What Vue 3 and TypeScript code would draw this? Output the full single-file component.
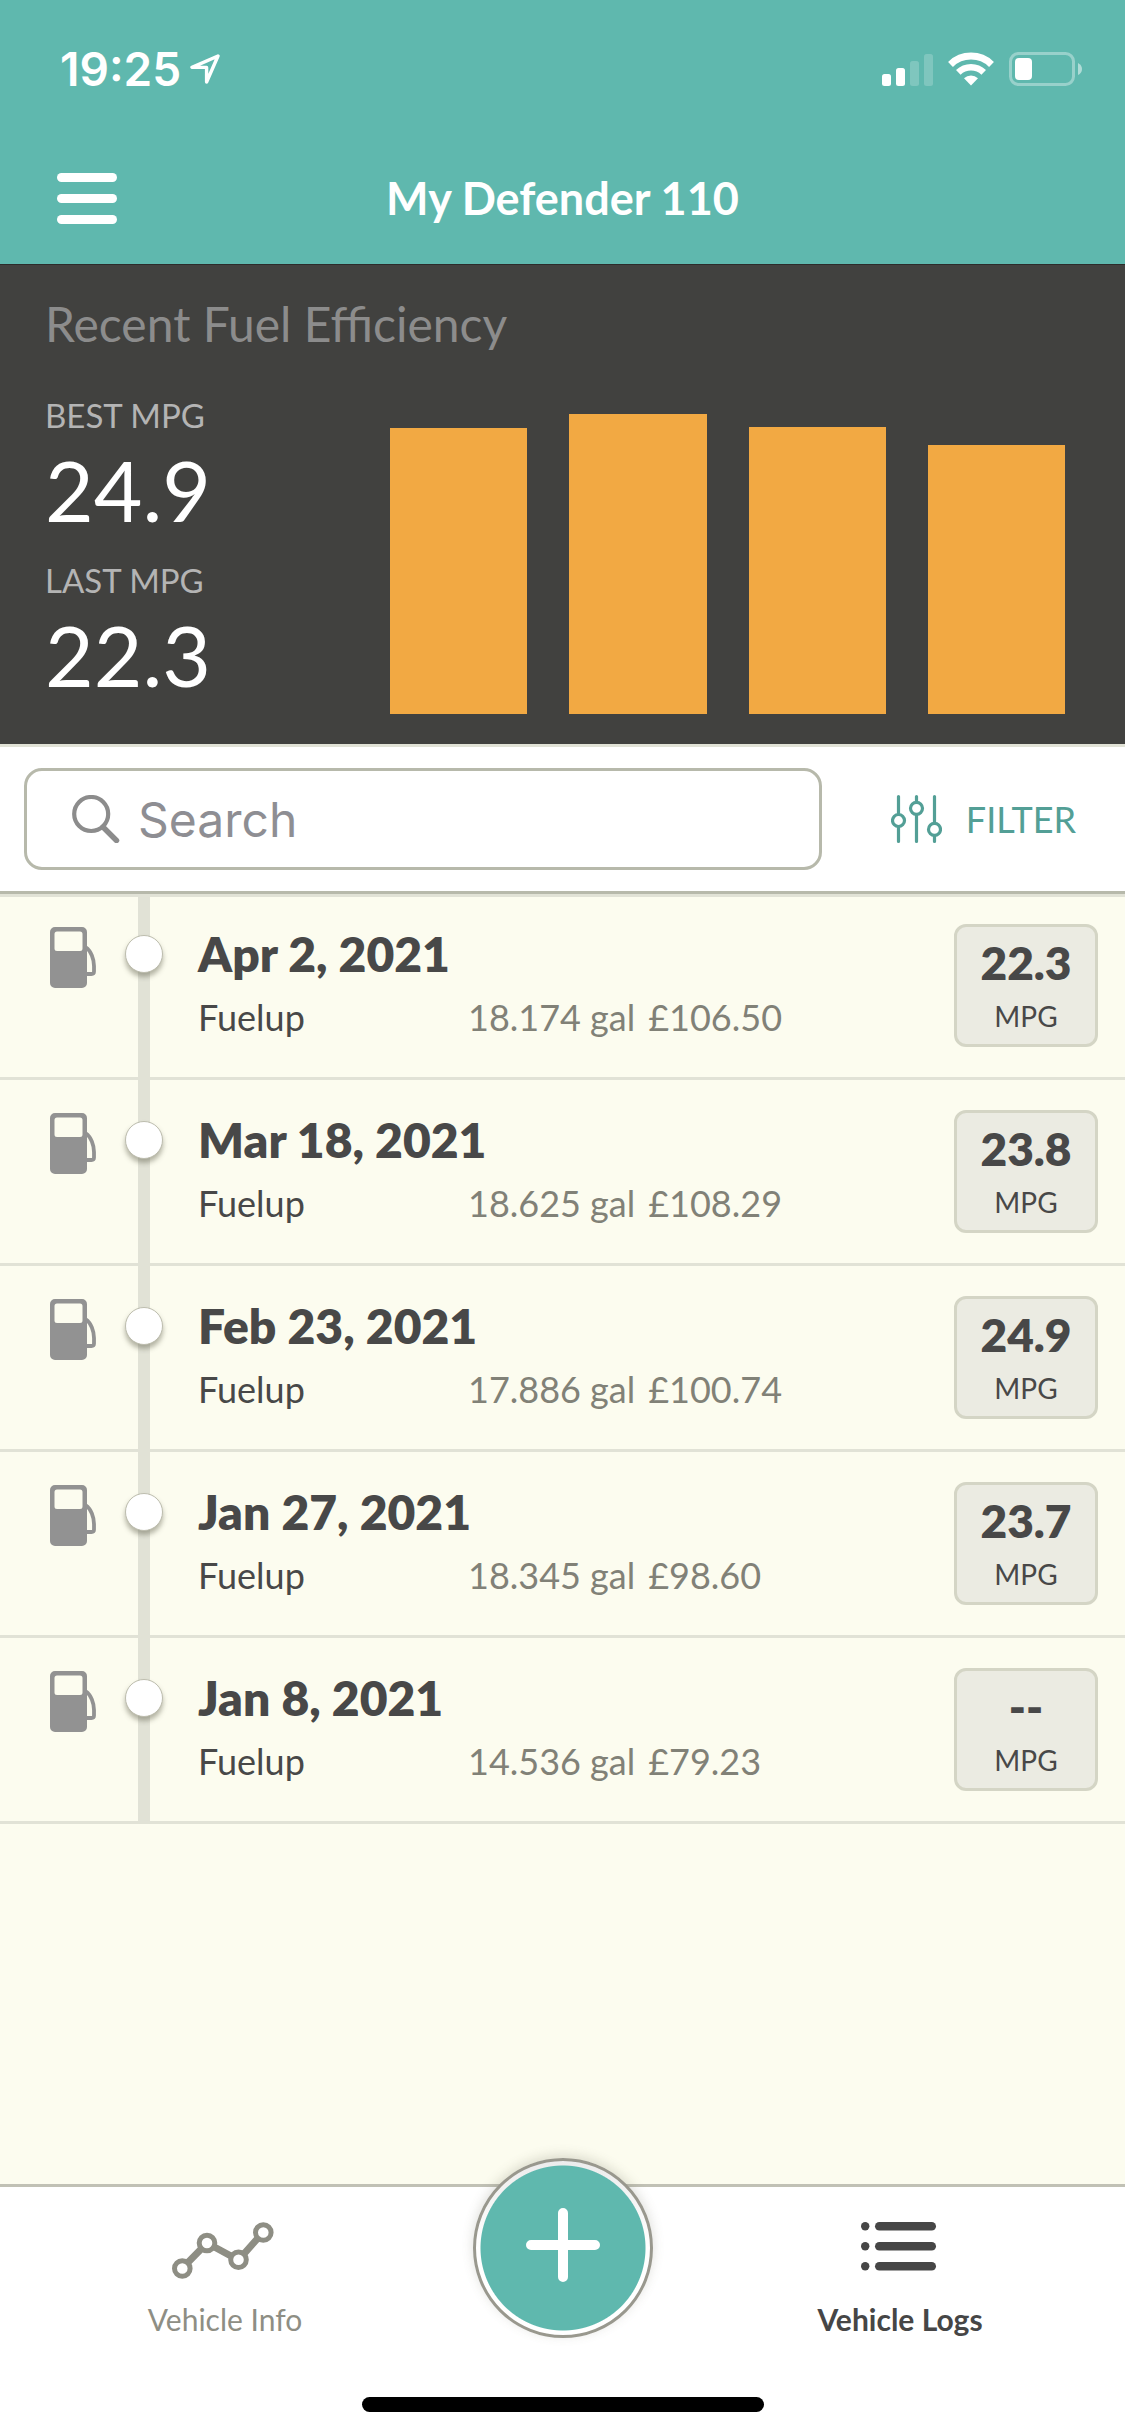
<script setup lang="ts">
import { computed, ref } from 'vue'

interface LogEntry {
  date: string
  kind: string
  volume: string
  cost: string
  mpg: number | null
}

const logs: LogEntry[] = [
  { date: 'Apr 2, 2021', kind: 'Fuelup', volume: '18.174 gal', cost: '£106.50', mpg: 22.3 },
  { date: 'Mar 18, 2021', kind: 'Fuelup', volume: '18.625 gal', cost: '£108.29', mpg: 23.8 },
  { date: 'Feb 23, 2021', kind: 'Fuelup', volume: '17.886 gal', cost: '£100.74', mpg: 24.9 },
  { date: 'Jan 27, 2021', kind: 'Fuelup', volume: '18.345 gal', cost: '£98.60', mpg: 23.7 },
  { date: 'Jan 8, 2021', kind: 'Fuelup', volume: '14.536 gal', cost: '£79.23', mpg: null },
]

const query = ref('')

const readings = computed(() =>
  logs.map((l) => l.mpg).filter((m): m is number => m !== null),
)
const best = computed(() => Math.max(...readings.value))
const last = computed(() => readings.value[0])
const bars = computed(() =>
  [...readings.value].reverse().map((m) => (m / best.value) * 100),
)
const shown = computed(() => {
  const q = query.value.trim().toLowerCase()
  return logs.filter((l) => `${l.date} ${l.kind}`.toLowerCase().includes(q))
})
</script>

<template>
  <div class="app">
    <header class="header">
      <div class="status">
        <div class="clock">
          <span>19:25</span>
          <svg width="30" height="30" viewBox="0 0 30 30" fill="none" stroke="#fff" stroke-width="3.4" stroke-linejoin="round">
            <path d="M28 2 L2 13.4 H16.6 V28 Z" />
          </svg>
        </div>
        <div class="signals">
          <svg width="51" height="33" viewBox="0 0 51 33" fill="#fff">
            <rect x="0" y="21" width="9" height="12" rx="2.5" />
            <rect x="14" y="15" width="9" height="18" rx="2.5" />
            <rect x="28" y="8" width="9" height="25" rx="2.5" opacity=".2" />
            <rect x="42" y="1" width="9" height="32" rx="2.5" opacity=".2" />
          </svg>
          <svg width="46" height="34" viewBox="0 0 46 34">
            <path d="M2.5 12.4 A29.5 29.5 0 0 1 43.5 12.4" fill="none" stroke="#fff" stroke-width="7" />
            <path d="M10.3 20.3 A18.3 18.3 0 0 1 35.7 20.3" fill="none" stroke="#fff" stroke-width="6.6" />
            <path d="M23 33.5 L16 26.2 A10.5 10.5 0 0 1 30 26.2 Z" fill="#fff" />
          </svg>
          <svg width="74" height="34" viewBox="0 0 74 34">
            <rect x="1.5" y="1.5" width="63" height="31" rx="8" fill="none" stroke="#fff" stroke-opacity=".36" stroke-width="3" />
            <rect x="6" y="6" width="17" height="22" rx="4" fill="#fff" />
            <path d="M69 11 Q73 13 73 17 Q73 21 69 23 Z" fill="#fff" opacity=".5" />
          </svg>
        </div>
      </div>
      <nav class="nav">
        <button class="menu" type="button" aria-label="Menu">
          <svg width="60" height="54" viewBox="0 0 60 54" fill="#fff">
            <rect y="2" width="60" height="9" rx="4.5" />
            <rect y="23" width="60" height="9" rx="4.5" />
            <rect y="44" width="60" height="9" rx="4.5" />
          </svg>
        </button>
        <h1>My Defender 110</h1>
      </nav>
    </header>

    <section class="summary">
      <h2>Recent Fuel Efficiency</h2>
      <div class="summary-body">
        <dl class="stats">
          <div>
            <dt>BEST MPG</dt>
            <dd>{{ best.toFixed(1) }}</dd>
          </div>
          <div>
            <dt>LAST MPG</dt>
            <dd>{{ last.toFixed(1) }}</dd>
          </div>
        </dl>
        <div class="chart">
          <div v-for="(h, i) in bars" :key="i" class="bar" :style="{ height: h + '%' }"></div>
        </div>
      </div>
    </section>

    <div class="toolbar">
      <label class="search">
        <svg width="48" height="48" viewBox="0 0 48 48" fill="none" stroke="#8c8c8c" stroke-linecap="round">
          <circle cx="19.2" cy="19" r="17" stroke-width="4.2" />
          <path d="M31 32 L44.5 45.5" stroke-width="5.4" />
        </svg>
        <input v-model="query" type="text" placeholder="Search" aria-label="Search" />
      </label>
      <button class="filter" type="button">
        <svg width="51" height="48" viewBox="0 0 51 48" fill="none" stroke="#539f96" stroke-width="3.2" stroke-linecap="round">
          <path d="M7.5 1.6 V18 M7.5 32 V46.4 M25.5 1.6 V6 M25.5 20 V46.4 M43.5 1.6 V27 M43.5 41 V46.4" />
          <circle cx="7.5" cy="25.5" r="6" />
          <circle cx="25.5" cy="13.3" r="6" />
          <circle cx="43.5" cy="34.4" r="6" />
        </svg>
        <span>FILTER</span>
      </button>
    </div>

    <main class="content">
      <ul class="logs">
        <li v-for="log in shown" :key="log.date" class="log">
          <svg class="pump" width="46" height="61" viewBox="0 0 46 61">
            <path fill="#929292" fill-rule="evenodd" d="M5 0 H32 A5 5 0 0 1 37 5 V56 A5 5 0 0 1 32 61 H5 A5 5 0 0 1 0 56 V5 A5 5 0 0 1 5 0 Z M7 4.5 A2.5 2.5 0 0 0 4.5 7 V21.5 A2.5 2.5 0 0 0 7 24 H30 A2.5 2.5 0 0 0 32.5 21.5 V7 A2.5 2.5 0 0 0 30 4.5 Z" />
            <path fill="none" stroke="#929292" stroke-width="3.8" d="M36 20.5 C41 24 44 32 44 39 V44.5 Q44 47 41.5 47 H36" />
          </svg>
          <div class="track"><span class="dot"></span></div>
          <div class="details">
            <h3>{{ log.date }}</h3>
            <p>
              <span class="kind">{{ log.kind }}</span>
              <span class="figures"><span>{{ log.volume }}</span><span>{{ log.cost }}</span></span>
            </p>
          </div>
          <div class="badge">
            <strong>{{ log.mpg === null ? '--' : log.mpg.toFixed(1) }}</strong>
            <span>MPG</span>
          </div>
        </li>
      </ul>
    </main>

    <footer class="tabbar">
      <div class="tabs">
        <a class="tab" href="#info">
          <svg width="106" height="57" viewBox="0 0 106 57" stroke="#8e8e84">
            <path d="M10 46.5 L35 21 L66.5 38 L91 10.5" fill="none" stroke-width="7" />
            <g fill="#fff" stroke-width="5">
              <circle cx="10.3" cy="46.5" r="7.8" />
              <circle cx="35" cy="21" r="7.8" />
              <circle cx="66.5" cy="37.8" r="7.8" />
              <circle cx="91.3" cy="10.5" r="7.8" />
            </g>
          </svg>
          <span>Vehicle Info</span>
        </a>
        <button class="add" type="button" aria-label="Add entry">
          <svg width="74" height="74" viewBox="0 0 74 74" fill="none" stroke="#fff" stroke-width="10" stroke-linecap="round">
            <path d="M37 5 V69 M5 37 H69" />
          </svg>
        </button>
        <a class="tab active" href="#logs" aria-current="page">
          <svg width="79" height="57" viewBox="0 0 79 57" fill="#464646">
            <circle cx="4.2" cy="4.3" r="4.2" />
            <circle cx="4.2" cy="24.3" r="4.2" />
            <circle cx="4.2" cy="44.3" r="4.2" />
            <rect x="14" y="0" width="61" height="8.6" rx="4.3" />
            <rect x="14" y="20" width="61" height="8.6" rx="4.3" />
            <rect x="14" y="40" width="61" height="8.6" rx="4.3" />
          </svg>
          <span>Vehicle Logs</span>
        </a>
      </div>
      <div class="home"></div>
    </footer>
  </div>
</template>

<style>
body {
  margin: 0;
}
</style>

<style scoped>
* {
  box-sizing: border-box;
}

.app {
  display: flex;
  flex-direction: column;
  min-height: 100vh;
  background: #fcfcef;
  color: #484848;
  font-family: Lato, "Liberation Sans", sans-serif;
}

h1,
h2,
h3,
p,
ul,
dl,
dd {
  margin: 0;
  padding: 0;
}

svg {
  display: block;
  flex: none;
}

button {
  border: 0;
  padding: 0;
  background: none;
  font: inherit;
  color: inherit;
}

a {
  color: inherit;
  text-decoration: none;
}

.header {
  background: #5fb8ae;
  color: #fff;
  padding-bottom: 6px;
}

.status {
  display: flex;
  align-items: center;
  justify-content: space-between;
  height: 138px;
  padding: 0 42px 0 60px;
}

.clock {
  display: flex;
  align-items: center;
  gap: 9px;
  font-family: Inter, "Liberation Sans", sans-serif;
  font-size: 46px;
  font-weight: 600;
}

.signals {
  display: flex;
  align-items: center;
  gap: 15px;
}

.nav {
  display: grid;
  grid-template-columns: 1fr auto 1fr;
  align-items: center;
  height: 120px;
  padding: 0 57px;
}

.menu {
  justify-self: start;
}

h1 {
  font-size: 45px;
  font-weight: 700;
}

.summary {
  padding: 25px 60px 30px 45px;
  background: #41413f;
  box-shadow: inset 0 1px #2c2c2b;
}

h2 {
  color: #8c8c8c;
  font-size: 48px;
  font-weight: 400;
  line-height: 70px;
}

.summary-body {
  display: flex;
  align-items: flex-end;
  margin-top: 36px;
}

.stats {
  display: flex;
  flex: 1;
  flex-direction: column;
  gap: 15px;
  padding-bottom: 4px;
}

dt {
  color: #b4b4b4;
  font-size: 33px;
  line-height: 40px;
}

dd {
  color: #fff;
  font-size: 84px;
  line-height: 110px;
}

.chart {
  display: flex;
  align-items: flex-end;
  gap: 42px;
  width: 60vw;
  height: 300px;
}

.bar {
  flex: 1;
  background: #f2a943;
}

.toolbar {
  position: relative;
  display: flex;
  padding: 21px 0 21px 24px;
  border-top: 3px solid #e1e2d6;
  border-bottom: 3px solid #b7b9ab;
  background: #fff;
  box-shadow: 0 3px #e1e2d6;
}

.search {
  display: flex;
  flex: 1;
  align-items: center;
  gap: 18px;
  min-width: 0;
  height: 102px;
  padding: 0 45px;
  border: 3px solid #b7b9ab;
  border-radius: 18px;
}

.search input {
  flex: 1;
  min-width: 0;
  border: 0;
  padding: 0;
  outline: 0;
  background: none;
  color: #484848;
  font-family: Inter, "Liberation Sans", sans-serif;
  font-size: 48px;
}

.search input::placeholder {
  color: #8e8e93;
  opacity: 1;
}

.filter {
  display: flex;
  align-items: center;
  gap: 24px;
  padding: 0 49px 0 69px;
  color: #539f96;
  font-size: 36px;
}

.content {
  flex: 1;
}

.logs {
  list-style: none;
}

.log {
  display: flex;
  align-items: flex-start;
  height: 186px;
  padding: 0 27px 0 50px;
  border-bottom: 3px solid #e1e2d6;
}

.pump {
  margin-top: 33px;
}

.track {
  align-self: stretch;
  width: 38px;
  margin: 0 35px 0 29px;
  padding-top: 41px;
  background: linear-gradient(#e1e2d6, #e1e2d6) center / 12px 100% no-repeat;
}

.dot {
  display: block;
  height: 38px;
  border: 1px solid #bdbdae;
  border-radius: 50%;
  background: #fff;
  box-shadow: 0 4px 5px rgba(90, 90, 70, 0.45);
}

.details {
  flex: 1;
  padding-top: 30px;
}

h3 {
  font-size: 48px;
  font-weight: 800;
  line-height: 60px;
}

.details p {
  display: flex;
  margin-top: 11px;
  font-size: 36px;
  line-height: 44px;
}

.kind {
  width: 270px;
}

.figures {
  display: flex;
  gap: 13px;
  color: #818177;
}

.badge {
  display: flex;
  flex-direction: column;
  align-items: center;
  gap: 9px;
  width: 144px;
  height: 123px;
  margin-top: 30px;
  padding-top: 8px;
  border: 3px solid #d4d5c5;
  border-radius: 12px;
  background: #ebebe2;
}

.badge strong {
  font-size: 46px;
  font-weight: 800;
  line-height: 56px;
}

.badge span {
  font-size: 28px;
  line-height: 32px;
}

.tabbar {
  border-top: 3px solid #c1c1b5;
  background: #fff;
}

.tabs {
  position: relative;
  display: flex;
  justify-content: space-between;
}

.tab {
  display: flex;
  flex-direction: column;
  align-items: center;
  gap: 20px;
  width: 40%;
  padding-top: 35px;
  color: #8e8e84;
  font-size: 30px;
  line-height: 40px;
}

.tab.active {
  color: #464646;
  font-weight: 700;
}

.add {
  position: absolute;
  top: -29px;
  left: 50%;
  display: flex;
  align-items: center;
  justify-content: center;
  width: 180px;
  height: 180px;
  padding-bottom: 6px;
  border: 3px solid #99988e;
  border-radius: 50%;
  background: radial-gradient(circle, #5fb8ae 82px, transparent 83px), linear-gradient(#ececec, #fff 50%);
  box-shadow: 0 -3px 12px rgba(90, 90, 70, 0.2);
  transform: translateX(-50%);
}

.home {
  width: 402px;
  height: 15px;
  margin: 58px auto 24px;
  border-radius: 8px;
  background: #000;
}
</style>
